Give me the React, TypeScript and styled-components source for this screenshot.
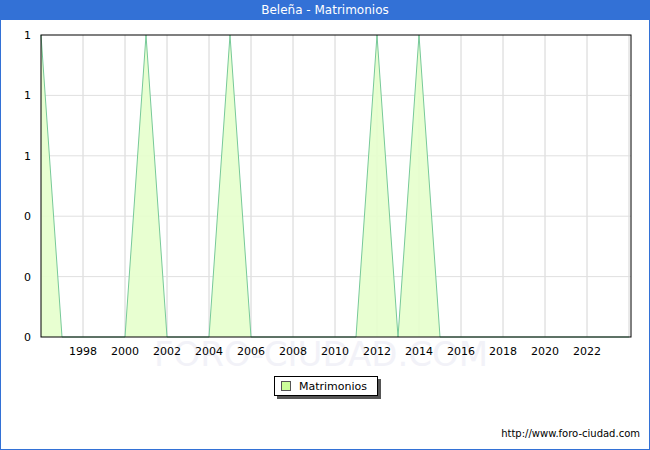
import React from "react";
import styled, { createGlobalStyle } from "styled-components";

const Global = createGlobalStyle`
  body { margin: 0; font-family: "DejaVu Sans", Verdana, sans-serif; }
`;
const Frame = styled.div`
  width: 650px; height: 450px; box-sizing: border-box;
  border: 1px solid #3371d6; border-top: none;
  display: flex; flex-direction: column; background: #fff;
`;
const Title = styled.div`
  height: 20px; background: #3371d6; color: #fff; font-size: 12px;
  display: flex; align-items: center; justify-content: center;
`;
const Legend = styled.div`
  align-self: center; margin-top: 6px; margin-left: 2px;
  display: flex; align-items: center; gap: 8px; padding: 2px 10px 2px 6px;
  border: 1px solid #000; box-shadow: 3px 3px 0 #555; font-size: 11px; height: 14px;
`;
const Swatch = styled.span`
  width: 8px; height: 8px; background: #ccff99; border: 1px solid #555;
`;
const Footer = styled.div`
  margin-top: auto; padding: 0 9px 10px 0; text-align: right; font-size: 10px;
`;

const X0 = 40, Y0 = 15, W = 590, H = 302;
const xs = (y: number) => X0 + (y - 1996) * 21;
const peaks = [1996, 2001, 2005, 2012, 2014];

export default function App() {
  const pts: string[] = [];
  for (let y = 1996; y <= 2024; y++) {
    const v = peaks.includes(y) ? 1 : 0;
    pts.push(`${xs(y)},${Y0 + H - v * H}`);
  }
  const area = `${xs(1996)},${Y0 + H} ${pts.join(" ")} ${xs(2024)},${Y0 + H}`;
  return (
    <Frame>
      <Global />
      <Title>Beleña - Matrimonios</Title>
      <svg width={648} height={350} style={{ display: "block" }}>
        <text x={320} y={346} textAnchor="middle" fontSize={34} fill="#f2f2f8" fontFamily="DejaVu Sans">FORO-CIUDAD.COM</text>
        {Array.from({ length: 14 }, (_, i) => xs(1998 + i * 2)).map((x) => (
          <line key={x} x1={x} x2={x} y1={Y0} y2={Y0 + H} stroke="#d4d4d4" />
        ))}
        {[1, 2, 3, 4].map((i) => (
          <line key={i} x1={X0} x2={X0 + W} y1={Y0 + i * H / 5} y2={Y0 + i * H / 5} stroke="#e0e0e0" />
        ))}
        <polygon points={area} fill="#e6ffcc" fillOpacity={0.9} />
        <polyline points={pts.join(" ")} fill="none" stroke="#77c999" strokeWidth={1} />
        <rect x={X0} y={Y0} width={W} height={H} fill="none" stroke="#000" />
        {["1", "1", "1", "0", "0", "0"].map((t, i) => (
          <text key={i} x={30} y={Y0 + i * H / 5 + 4} textAnchor="end" fontSize={11} fill="#000">{t}</text>
        ))}
        {Array.from({ length: 13 }, (_, i) => 1998 + i * 2).map((y) => (
          <text key={y} x={xs(y)} y={Y0 + H + 18} textAnchor="middle" fontSize={11} fill="#000">{y}</text>
        ))}
      </svg>
      <Legend><Swatch />Matrimonios</Legend>
      <Footer>http://www.foro-ciudad.com</Footer>
    </Frame>
  );
}
